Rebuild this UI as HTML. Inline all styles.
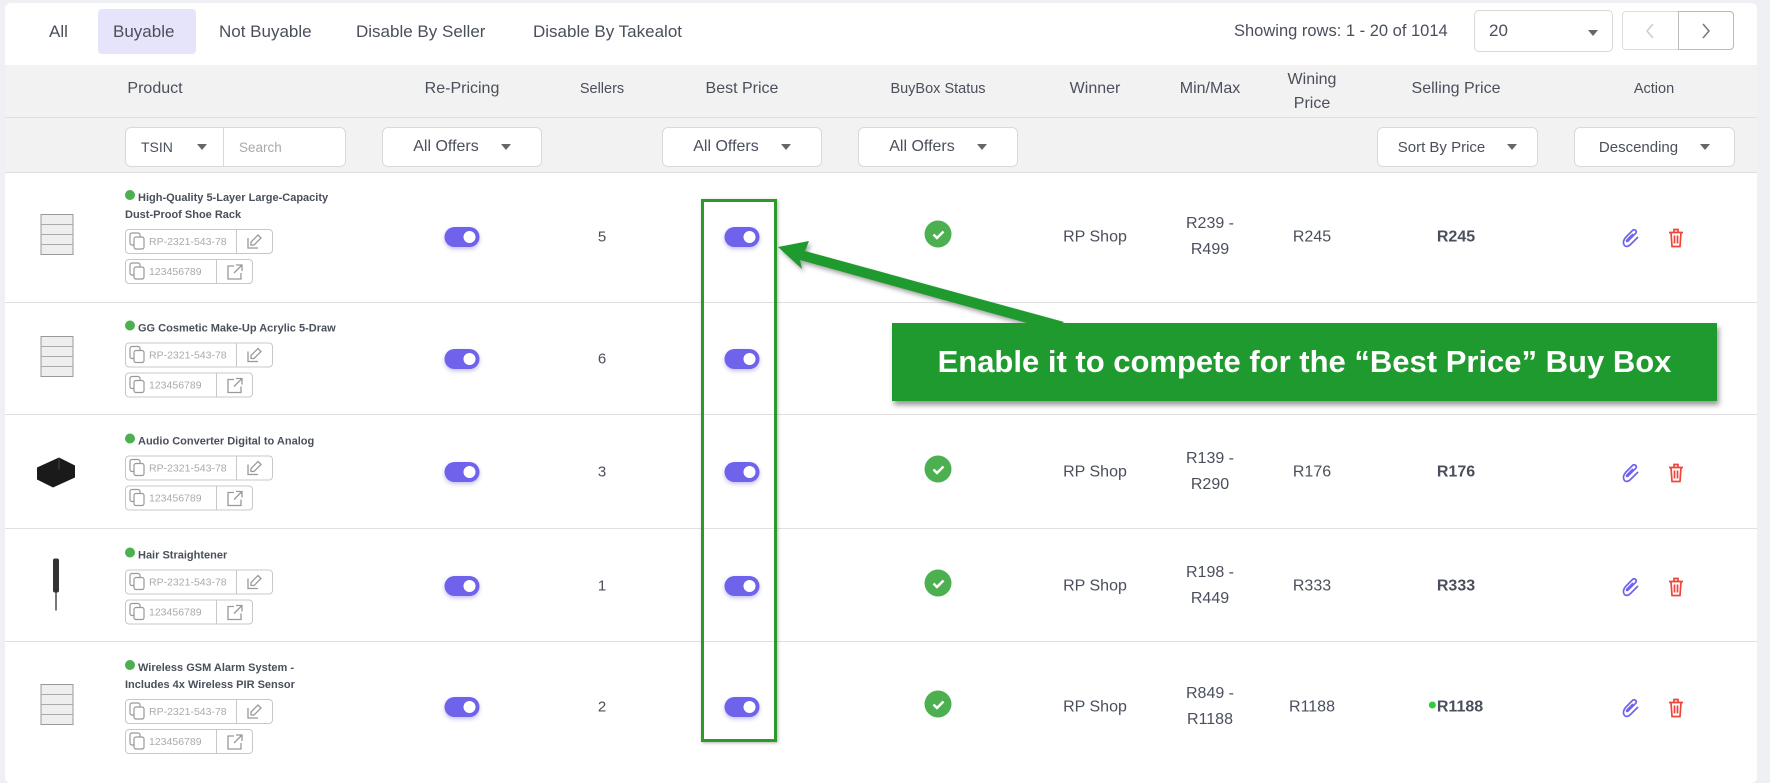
<!DOCTYPE html>
<html><head><meta charset="utf-8"><style>
*{box-sizing:border-box;margin:0;padding:0}
body{width:1770px;height:771px;overflow:hidden;background:#eef0f3;font-family:"Liberation Sans",sans-serif;color:#4a4f5c;position:relative}
.card{position:absolute;left:5px;top:3px;width:1752px;height:780px;background:#fff;border-radius:6px}
.abs{position:absolute}
.tab{position:absolute;top:9px;height:45px;line-height:45px;font-size:17px;color:#4a4f5c}
.hdr{position:absolute;left:5px;top:65px;width:1752px;height:107px;background:#f2f2f2}
.hline{position:absolute;left:5px;width:1752px;height:1px;background:#dedede}
.th{position:absolute;font-size:16px;color:#4a4f5c;text-align:center;transform:translateX(-50%);white-space:nowrap}
.sel{position:absolute;top:127px;height:40px;background:#fff;border:1px solid #d9d9d9;border-radius:6px;font-size:16px;color:#4a4f5c;display:flex;align-items:center;justify-content:center;gap:22px}
.caret{width:0;height:0;border-left:5px solid transparent;border-right:5px solid transparent;border-top:6px solid #666}
.row{position:absolute;left:5px;width:1752px;border-bottom:1px solid #e0e0e0}
.c{position:absolute;transform:translate(-50%,-50%);text-align:center;font-size:16px;color:#4a4f5c;white-space:nowrap;line-height:25px}
.c svg{display:block}
.tog{width:35px;height:20px;border-radius:10px;background:#6f63ec;position:relative;box-shadow:0 2px 4px rgba(80,70,200,.35)}
.tog:after{content:"";position:absolute;right:4px;top:4px;width:12px;height:12px;border-radius:50%;background:#fff}
.chk{width:27px;height:27px;border-radius:50%;background:#4caf50;display:flex;align-items:center;justify-content:center}
.prod{position:absolute;left:125px;transform:translateY(-50%)}
.title{font-size:11px;font-weight:bold;color:#4a4f5c;line-height:17px;width:212px}
.dot{display:inline-block;width:10px;height:10px;border-radius:50%;background:#4caf50;margin-right:3px;vertical-align:1px}
.chip{display:flex;height:25px;border:1px solid #c8c8c8;border-radius:4px;margin-top:5px;font-size:10.5px;color:#aaa;align-items:center}
.chip .a{display:flex;align-items:center;gap:2px;padding:0 3px;border-right:1px solid #c8c8c8;height:100%}
.chip .b{width:36px;display:flex;align-items:center;justify-content:center}
.img{position:absolute;left:56px;transform:translate(-50%,-50%)}
</style></head><body>
<div class="card"></div>
<div class="abs" style="left:98px;top:9px;width:98px;height:45px;background:#e6e4fb;border-radius:4px"></div>
<div class="tab" style="left:49px">All</div>
<div class="tab" style="left:113px">Buyable</div>
<div class="tab" style="left:219px">Not Buyable</div>
<div class="tab" style="left:356px">Disable By Seller</div>
<div class="tab" style="left:533px">Disable By Takealot</div>
<div class="abs" style="left:1234px;top:22px;font-size:16.5px">Showing rows: 1 - 20 of 1014</div>
<div class="abs" style="left:1474px;top:10px;width:139px;height:42px;border:1px solid #d9d9d9;border-radius:5px;font-size:17px;padding:10px 14px">20<span class="caret abs" style="right:14px;top:19px"></span></div>
<div class="abs" style="left:1622px;top:11px;width:112px;height:39px;border:1px solid #ddd;border-radius:4px"></div>
<div class="abs" style="left:1678px;top:11px;width:56px;height:39px;border:1px solid #bbb;border-radius:0 4px 4px 0"></div>
<svg class="abs" style="left:1644px;top:22px" width="12" height="18"><path d="M9 2L3 9l6 7" fill="none" stroke="#ccc" stroke-width="1.5"/></svg>
<svg class="abs" style="left:1700px;top:22px" width="12" height="18"><path d="M3 2l6 7-6 7" fill="none" stroke="#777" stroke-width="1.5"/></svg>
<div class="hdr"></div>
<div class="hline" style="top:117px"></div>
<div class="hline" style="top:172px"></div>
<div class="th" style="left:155px;top:80px">Product</div>
<div class="th" style="left:462px;top:80px">Re-Pricing</div>
<div class="th" style="left:602px;top:81px;font-size:14.5px">Sellers</div>
<div class="th" style="left:742px;top:80px">Best Price</div>
<div class="th" style="left:938px;top:81px;font-size:14.5px">BuyBox Status</div>
<div class="th" style="left:1095px;top:80px">Winner</div>
<div class="th" style="left:1210px;top:80px">Min/Max</div>
<div class="th" style="left:1312px;top:68px;line-height:24px">Wining<br>Price</div>
<div class="th" style="left:1456px;top:80px">Selling Price</div>
<div class="th" style="left:1654px;top:81px;font-size:14.5px">Action</div>
<div class="sel" style="left:125px;width:221px;justify-content:flex-start;gap:0;font-size:14px"><span style="width:98px;padding-left:15px;display:flex;align-items:center;gap:24px;border-right:1px solid #d9d9d9;height:100%">TSIN<span class="caret"></span></span><span style="padding-left:15px;color:#aaa;font-size:13.5px">Search</span></div>
<div class="sel" style="left:382px;width:160px">All Offers<span class="caret"></span></div>
<div class="sel" style="left:662px;width:160px">All Offers<span class="caret"></span></div>
<div class="sel" style="left:858px;width:160px">All Offers<span class="caret"></span></div>
<div class="sel" style="left:1377px;width:161px;font-size:15px">Sort By Price<span class="caret"></span></div>
<div class="sel" style="left:1574px;width:161px;font-size:15px">Descending<span class="caret"></span></div>

<div class="row" style="top:172px;height:131px"></div>
<div class="row" style="top:303px;height:112px"></div>
<div class="row" style="top:415px;height:114px"></div>
<div class="row" style="top:529px;height:113px"></div>
<div class="row" style="top:642px;height:140px;border:none"></div>

<svg width="0" height="0" style="position:absolute"><defs>
<g id="cp"><rect x="1" y="1" width="10" height="12" rx="2" fill="none" stroke="#999" stroke-width="1.2"/><rect x="5" y="5" width="10" height="12" rx="2" fill="#fff" stroke="#999" stroke-width="1.2"/></g>
<g id="ed"><path d="M3 6v10h10M13 3l3 3-7 7h-3v-3z" fill="none" stroke="#999" stroke-width="1.3"/></g>
<g id="ex"><path d="M9 4H3v13h13v-6M11 3h6v6M17 3L9 11" fill="none" stroke="#999" stroke-width="1.3"/></g>
<g id="pen"><path d="M4 19c-3-3-1-7 1-9l7-7c2-1 4 1 3 3l-8 8c-1 1-2 0-1-1l6-6M4 19c2 1 4 0 6-2l7-7" fill="none" stroke="#6f63ec" stroke-width="1.7"/></g>
<g id="bin"><path d="M2 5h14M7 5V2h4v3M4 5l1 14h8l1-14M7.5 8v8M10.5 8v8" fill="none" stroke="#f0443a" stroke-width="1.7"/></g>
</defs></svg>

<div id="rows"></div>
<script>
var R=[[237,'High-Quality 5-Layer Large-Capacity Dust-Proof Shoe Rack','5','R239 -','R499','R245','R245'],
[359,'GG Cosmetic Make-Up Acrylic 5-Draw','6','','','',''],
[472,'Audio Converter Digital to Analog','3','R139 -','R290','R176','R176'],
[586,'Hair Straightener','1','R198 -','R449','R333','R333'],
[707,'Wireless GSM Alarm System - Includes 4x Wireless PIR Sensor','2','R849 -','R1188','R1188','R1188']];
var h='';
R.forEach(function(r,i){var y=r[0];
h+='<div class="img" style="top:'+y+'px"><svg width="50" height="60" viewBox="0 0 50 60">'+
(i==2?'<path d="M6 28l22-10 16 8v12l-22 10-16-8z" fill="#1a1a1a"/><path d="M28 18v12" stroke="#444"/>':
i==3?'<rect x="22" y="5" width="6" height="34" rx="2" fill="#333"/><rect x="24" y="39" width="2" height="18" fill="#777"/>':
'<rect x="10" y="10" width="32" height="40" fill="#eee" stroke="#999"/><path d="M10 20h32M10 30h32M10 40h32" stroke="#aaa"/>')+'</svg></div>';
h+='<div class="prod" style="top:'+y+'px"><div class="title"><span class="dot"></span>'+r[1]+'</div>'+
'<div class="chip" style="width:148px"><div class="a" style="width:112px"><svg width="18" height="19"><use href="#cp"/></svg>RP-2321-543-78</div><div class="b"><svg width="19" height="19"><use href="#ed"/></svg></div></div>'+
'<div class="chip" style="width:128px"><div class="a" style="width:92px"><svg width="18" height="19"><use href="#cp"/></svg>123456789</div><div class="b"><svg width="19" height="19"><use href="#ex"/></svg></div></div></div>';
h+='<div class="c" style="left:462px;top:'+y+'px"><div class="tog"></div></div>';
h+='<div class="c" style="left:602px;top:'+y+'px;font-size:15px">'+r[2]+'</div>';
h+='<div class="c" style="left:742px;top:'+y+'px"><div class="tog"></div></div>';
if(i!=1){
h+='<div class="c" style="left:938px;top:'+(y-3)+'px"><div class="chk"><svg width="14" height="12"><path d="M2 6l3.5 3.5L12 3" fill="none" stroke="#fff" stroke-width="2.4"/></svg></div></div>';
h+='<div class="c" style="left:1095px;top:'+y+'px">RP Shop</div>';
h+='<div class="c" style="left:1210px;top:'+y+'px;line-height:26px">'+r[3]+'<br>'+r[4]+'</div>';
h+='<div class="c" style="left:1312px;top:'+y+'px">'+r[5]+'</div>';
h+='<div class="c" style="left:1456px;top:'+y+'px;font-weight:bold">'+(i==4?'<span style="display:inline-block;width:7px;height:7px;border-radius:50%;background:#2ecc40;vertical-align:3px;margin-right:1px"></span>':'')+r[6]+'</div>';}
h+='<div class="c" style="left:1631px;top:'+(y+1)+'px"><svg width="20" height="22"><use href="#pen"/></svg></div>';
h+='<div class="c" style="left:1676px;top:'+(y+1)+'px"><svg width="18" height="21"><use href="#bin"/></svg></div>';
});
document.getElementById('rows').innerHTML=h;
</script>

<div class="abs" style="left:701px;top:199px;width:76px;height:543px;border:3px solid #2a9a2a;box-shadow:1px 1px 3px rgba(0,0,0,.3)"></div>
<svg class="abs" style="left:0;top:0;filter:drop-shadow(2px 3px 2px rgba(0,0,0,.35))" width="1770" height="771">
<polygon points="778,247 809,241 805,251 1064,322 1052,330 800,260 802,269" fill="#1f9a2e"/>
</svg>
<div class="abs" style="left:892px;top:323px;width:825px;height:78px;background:#1f9a2e;box-shadow:2px 4px 5px rgba(0,0,0,.4);color:#fff;font-weight:bold;font-size:31px;line-height:78px;text-align:center;letter-spacing:0px">Enable it to compete for the “Best Price” Buy Box</div>
</body></html>
